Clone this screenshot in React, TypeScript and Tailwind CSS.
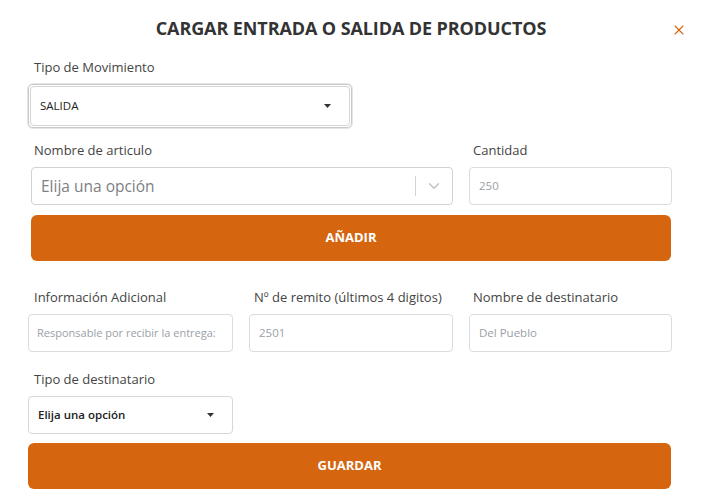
import { X, ChevronDown } from "lucide-react"

const font = { fontFamily: '"Open Sans", "Liberation Sans", sans-serif' }

function Caret() {
  return (
    <svg width="7" height="4" viewBox="0 0 7 4" className="shrink-0">
      <path d="M0 0h7L3.5 4z" fill="#333" />
    </svg>
  )
}

function Label({ children, className = "pl-[6px]" }: { children: React.ReactNode; className?: string }) {
  return <p className={`text-[13px] text-[#444] leading-none mb-[10px] ${className}`}>{children}</p>
}

function TextInput({ placeholder }: { placeholder: string }) {
  return (
    <div className="h-[38px] rounded-[4px] border border-[#d9dce1] bg-white flex items-center px-[9px] text-[11.5px] text-[#9aa0a8]">
      <span className="truncate">{placeholder}</span>
    </div>
  )
}

export default function App() {
  return (
    <div className="w-[702px] h-[504px] bg-white relative overflow-hidden" style={font}>
      <div className="flex items-center justify-center h-[58px] pb-[2px]">
        <h1 className="text-[18px] font-bold text-[#333] tracking-[-0.1px]">CARGAR ENTRADA O SALIDA DE PRODUCTOS</h1>
      </div>
      <button className="absolute right-[15px] top-[22px] text-[#d5650f]">
        <X size={16} strokeWidth={1.6} />
      </button>

      <div className="px-[28px] pr-[30px]">
        <div className="mt-[3px]">
          <Label>Tipo de Movimiento</Label>
          <div className="w-[324px] h-[44px] rounded-[5px] border border-[#c8c8c8] p-[1px] shadow-[0_0_0_1px_#e6e6e6]">
            <div className="h-full rounded-[4px] border border-[#d4d4d4] flex items-center justify-between pl-[9px] pr-[18px]">
              <span className="text-[11.5px] text-[#222]">SALIDA</span>
              <Caret />
            </div>
          </div>
        </div>

        <div className="flex gap-[16px] mt-[16px] pl-[3px]">
          <div className="w-[422px]">
            <Label className="pl-[3px]">Nombre de articulo</Label>
            <div className="h-[38px] rounded-[4px] border border-[#cfd3d8] flex items-center">
              <span className="flex-1 pl-[9px] pt-[1px] text-[15.5px] text-[#7d7f83]">Elija una opción</span>
              <span className="w-px h-[20px] bg-[#d3d3d3]" />
              <span className="w-[36px] flex justify-center text-[#bdbdbd]">
                <ChevronDown size={18} strokeWidth={1.6} />
              </span>
            </div>
          </div>
          <div className="flex-1">
            <Label className="pl-[4px]">Cantidad</Label>
            <TextInput placeholder="250" />
          </div>
        </div>

        <button className="mt-[10px] ml-[3px] w-[640px] h-[46px] rounded-[6px] bg-[#d5650f] text-white text-[13px] font-bold">
          AÑADIR
        </button>

        <div className="grid grid-cols-[205px_204px_203px] gap-[16px] mt-[30px]">
          <div>
            <Label>Información Adicional</Label>
            <div className="h-[38px] rounded-[4px] border border-[#d9dce1] flex items-center pl-[8px] text-[11px] text-[#9aa0a8] whitespace-nowrap overflow-hidden">
              Responsable por recibir la entrega:
            </div>
          </div>
          <div>
            <Label className="pl-[5px]">Nº de remito (últimos 4 digitos)</Label>
            <TextInput placeholder="2501" />
          </div>
          <div>
            <Label className="pl-[4px]">Nombre de destinatario</Label>
            <TextInput placeholder="Del Pueblo" />
          </div>
        </div>

        <div className="mt-[21px]">
          <Label>Tipo de destinatario</Label>
          <div className="w-[205px] h-[38px] rounded-[4px] border border-[#d4d7dc] flex items-center justify-between pl-[9px] pr-[18px]">
            <span className="text-[11.5px] font-semibold text-[#222]">Elija una opción</span>
            <Caret />
          </div>
        </div>

        <button className="mt-[9px] w-[643px] h-[46px] rounded-[6px] bg-[#d5650f] text-white text-[13px] font-bold">
          GUARDAR
        </button>
      </div>
    </div>
  )
}
